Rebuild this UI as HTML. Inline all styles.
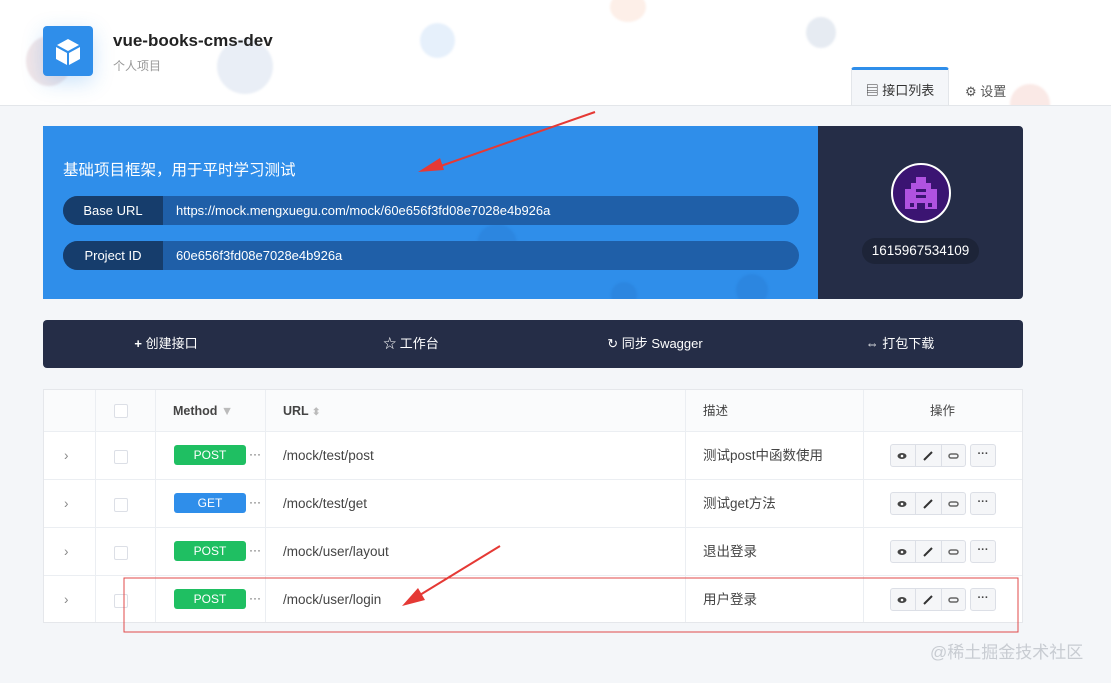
<!DOCTYPE html>
<html><head><meta charset="utf-8"><style>
*{box-sizing:border-box;margin:0;padding:0}
body{width:1111px;height:683px;overflow:hidden;background:#f4f6f9;font-family:"Liberation Sans","Noto Sans CJK SC",sans-serif;position:relative;font-size:13px;color:#333}
.abs{position:absolute}
.hdr{left:0;top:0;width:1111px;height:106px;background:#fff;border-bottom:1px solid #e3e6ea;overflow:hidden}
.dot{position:absolute;border-radius:50%;filter:blur(1px)}
.blue{left:43px;top:126px;width:776px;height:173px;background:#2f8eea;overflow:hidden}
.dark{left:818px;top:126px;width:205px;height:173px;background:#252d47;border-radius:0 4px 4px 0}
.pill{position:absolute;left:63px;width:736px;height:29px;border-radius:15px;background:#1f5fa8;color:#fff;font-size:13px}
.pill .l{position:absolute;left:0;top:0;width:100px;height:29px;border-radius:15px 0 0 15px;background:#163d6c;text-align:center;line-height:29px}
.pill .r{position:absolute;left:113px;line-height:29px}
.bar{left:43px;top:320px;width:980px;height:48px;background:#252d47;border-radius:4px;color:#fff;font-size:13px}
.bar span{position:absolute;top:0;line-height:48px;transform:translateX(-50%)}
.tbl{left:43px;top:389px;width:980px;height:234px;background:#fff;border:1px solid #e5e7eb}
.row{position:absolute;left:0;width:978px;border-bottom:1px solid #ebeef2}
.vl{position:absolute;top:0;width:1px;height:232px;background:#ebeef2}
.cell{position:absolute;top:0;line-height:47px;font-size:13.5px;color:#444}
.tag{position:absolute;left:130px;width:72px;height:20px;border-radius:3px;color:#fff;text-align:center;line-height:20px;font-size:12px}
.cb{position:absolute;left:70px;width:14px;height:14px;border:1px solid #dcdfe6;border-radius:2px;background:#fff}
.btns{position:absolute;left:846px;width:76px;height:23px;border:1px solid #dcdfe6;border-radius:3px;background:#f5f6f8}
.btns i{position:absolute;top:0;width:1px;height:21px;background:#dcdfe6}
.more{position:absolute;left:926px;width:26px;height:23px;border:1px solid #dcdfe6;border-radius:3px;background:#f5f6f8;text-align:center;line-height:18px;font-size:11px;font-weight:bold;color:#444}
.dd{position:absolute;left:205px;font-size:12px;color:#555}
</style></head><body>
<div class="abs hdr">
 <div class="dot" style="left:26px;top:36px;width:46px;height:50px;background:#f1e6e8"></div>
 <div class="dot" style="left:217px;top:39px;width:56px;height:55px;background:#e9eef6"></div>
 <div class="dot" style="left:420px;top:23px;width:35px;height:35px;background:#e6f0fb"></div>
 <div class="dot" style="left:610px;top:-8px;width:36px;height:30px;background:#fdefe8"></div>
 <div class="dot" style="left:806px;top:17px;width:30px;height:31px;background:#e6ebf2"></div>
 <div class="dot" style="left:1010px;top:84px;width:40px;height:40px;background:#fae9e6"></div>
 <div class="abs" style="left:43px;top:26px;width:50px;height:50px;background:#2f8eea;border-radius:4px;box-shadow:0 6px 20px rgba(47,142,234,.25)">
  <svg width="50" height="50" viewBox="0 0 50 50"><path d="M25 13 L36 19 L25 25 L14 19Z" fill="#fff"/><path d="M13 21 L24 27 L24 39 L13 33Z" fill="#fff"/><path d="M37 21 L26 27 L26 39 L37 33Z" fill="#fff"/></svg>
 </div>
 <div class="abs" style="left:113px;top:31px;font-size:17px;font-weight:bold;color:#222">vue-books-cms-dev</div>
 <div class="abs" style="left:113px;top:57px;font-size:12px;color:#999">个人项目</div>
 <div class="abs" style="left:851px;top:67px;width:98px;height:40px;background:#f4f6f9;border:1px solid #e3e6ea;border-top:3px solid #2f8eea;border-bottom:none;border-radius:3px 3px 0 0;font-size:13px;color:#333;text-align:center;line-height:42px">▤ 接口列表</div>
 <div class="abs" style="left:965px;top:81px;font-size:13px;color:#555">⚙ 设置</div>
</div>
<div class="abs blue">
 <div class="dot" style="left:434px;top:98px;width:40px;height:40px;background:#2c86e0"></div>
 <div class="dot" style="left:568px;top:156px;width:26px;height:26px;background:#2c86e0"></div>
 <div class="dot" style="left:693px;top:148px;width:32px;height:32px;background:#2c86e0"></div>
 <div class="abs" style="left:20px;top:32px;color:#fff;font-size:15.5px">基础项目框架，用于平时学习测试</div>
</div>
<div class="pill" style="top:196px"><div class="l">Base URL</div><div class="r">https://mock.mengxuegu.com/mock/60e656f3fd08e7028e4b926a</div></div>
<div class="pill" style="top:241px"><div class="l">Project ID</div><div class="r">60e656f3fd08e7028e4b926a</div></div>
<div class="abs dark">
 <svg class="abs" style="left:73px;top:37px" width="60" height="60" viewBox="0 0 60 60"><circle cx="30" cy="30" r="29" fill="#3b1472" stroke="#fff" stroke-width="2"/>
 <g fill="#b052e0"><rect x="25" y="14" width="10" height="6"/><rect x="20" y="20" width="20" height="6"/><rect x="14" y="26" width="32" height="10"/><rect x="14" y="36" width="32" height="10"/></g>
 <g fill="#3b1472"><rect x="25" y="26" width="10" height="3"/><rect x="25" y="32" width="10" height="3"/><rect x="19" y="40" width="4" height="4"/><rect x="37" y="40" width="4" height="4"/><rect x="26" y="40" width="8" height="6"/></g></svg>
 <div class="abs" style="left:44px;top:112px;width:117px;height:26px;border-radius:13px;background:#1d2438;color:#fff;font-size:13.5px;text-align:center;line-height:26px">1615967534109</div>
</div>
<div class="abs bar">
 <span style="left:123px"><b>+</b> 创建接口</span>
 <span style="left:368px">☆ 工作台</span>
 <span style="left:612px">↻ 同步 Swagger</span>
 <span style="left:857px">⇔ 打包下载</span>
</div>
<div class="abs tbl">
 <div class="row" style="top:0;height:42px;background:#fafbfc"></div>
 <div class="row" style="top:42px;height:48px"></div>
 <div class="row" style="top:90px;height:48px"></div>
 <div class="row" style="top:138px;height:48px"></div>
 <div class="vl" style="left:51px"></div><div class="vl" style="left:111px"></div><div class="vl" style="left:221px"></div><div class="vl" style="left:641px"></div><div class="vl" style="left:819px"></div>
 <div class="cb" style="top:14px"></div>
 <div class="cell" style="left:129px;line-height:42px;font-weight:bold;font-size:12.5px">Method <span style="color:#bbb">▼</span></div>
 <div class="cell" style="left:239px;line-height:42px;font-weight:bold;font-size:12.5px">URL <span style="color:#bbb;font-size:10px">⬍</span></div>
 <div class="cell" style="left:659px;line-height:42px;font-size:12.5px">描述</div>
 <div class="cell" style="left:886px;line-height:42px;font-size:12.5px">操作</div>

 <div class="cell" style="left:20px;top:42px;color:#888">›</div><div class="cb" style="top:60px"></div>
 <div class="tag" style="top:55px;background:#1fbf62">POST</div><div class="dd" style="top:57px">···</div>
 <div class="cell" style="left:239px;top:42px">/mock/test/post</div><div class="cell" style="left:659px;top:42px">测试post中函数使用</div>
 <div class="btns" style="top:54px"><i style="left:24px"></i><i style="left:50px"></i></div><div class="more" style="top:54px">···</div>

 <div class="cell" style="left:20px;top:90px;color:#888">›</div><div class="cb" style="top:108px"></div>
 <div class="tag" style="top:103px;background:#2f8eea">GET</div><div class="dd" style="top:105px">···</div>
 <div class="cell" style="left:239px;top:90px">/mock/test/get</div><div class="cell" style="left:659px;top:90px">测试get方法</div>
 <div class="btns" style="top:102px"><i style="left:24px"></i><i style="left:50px"></i></div><div class="more" style="top:102px">···</div>

 <div class="cell" style="left:20px;top:138px;color:#888">›</div><div class="cb" style="top:156px"></div>
 <div class="tag" style="top:151px;background:#1fbf62">POST</div><div class="dd" style="top:153px">···</div>
 <div class="cell" style="left:239px;top:138px">/mock/user/layout</div><div class="cell" style="left:659px;top:138px">退出登录</div>
 <div class="btns" style="top:150px"><i style="left:24px"></i><i style="left:50px"></i></div><div class="more" style="top:150px">···</div>

 <div class="cell" style="left:20px;top:186px;color:#888">›</div><div class="cb" style="top:204px"></div>
 <div class="tag" style="top:199px;background:#1fbf62">POST</div><div class="dd" style="top:201px">···</div>
 <div class="cell" style="left:239px;top:186px">/mock/user/login</div><div class="cell" style="left:659px;top:186px">用户登录</div>
 <div class="btns" style="top:198px"><i style="left:24px"></i><i style="left:50px"></i></div><div class="more" style="top:198px">···</div>
</div>
<svg class="abs" style="left:0;top:0" width="1111" height="683">
 <g id="ic">
 <g fill="#444"><ellipse cx="902" cy="456" rx="4.5" ry="3"/><ellipse cx="902" cy="504" rx="4.5" ry="3"/><ellipse cx="902" cy="552" rx="4.5" ry="3"/><ellipse cx="902" cy="600" rx="4.5" ry="3"/></g>
 <g fill="#fff"><circle cx="902" cy="456" r="1.3"/><circle cx="902" cy="504" r="1.3"/><circle cx="902" cy="552" r="1.3"/><circle cx="902" cy="600" r="1.3"/></g>
 <g stroke="#333" stroke-width="2"><path d="M924 460 l8 -8 M924 508 l8 -8 M924 556 l8 -8 M924 604 l8 -8"/></g>
 <g stroke="#666" stroke-width="1.5" fill="none"><rect x="949" y="454" width="9" height="4" rx="2"/><rect x="949" y="502" width="9" height="4" rx="2"/><rect x="949" y="550" width="9" height="4" rx="2"/><rect x="949" y="598" width="9" height="4" rx="2"/></g>
 </g>
 <rect x="124" y="578" width="894" height="54" fill="none" stroke="#e04a4a" stroke-width="1"/>
 <path d="M595 112 L435 168" stroke="#e53935" stroke-width="2"/><path d="M418 172 L440 158 L444 170Z" fill="#e53935"/>
 <path d="M500 546 L415 598" stroke="#e53935" stroke-width="2"/><path d="M402 606 L418 588 L425 600Z" fill="#e53935"/>
 <text x="930" y="658" font-size="17" fill="#c8ccd2" font-family="Liberation Sans,Noto Sans CJK SC,sans-serif">@稀土掘金技术社区</text>
</svg>
</body></html>
